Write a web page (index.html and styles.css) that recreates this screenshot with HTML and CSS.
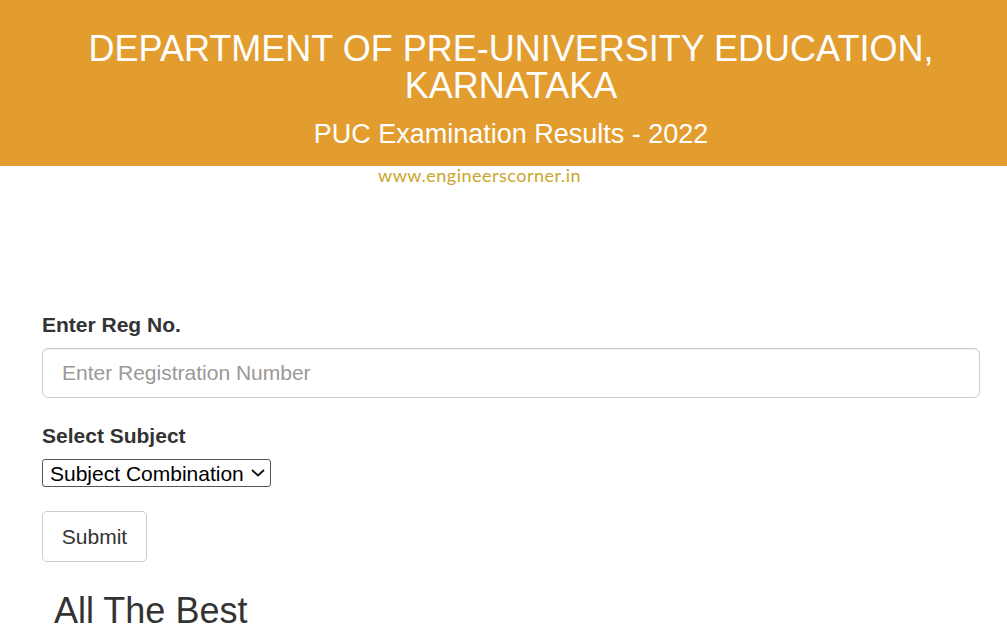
FILE: index.html
```html
<!DOCTYPE html>
<html lang="en">
<head>
  <meta charset="UTF-8">
  <title>PUC Examination Results - 2022</title>
  <meta name="viewport" content="width=device-width, initial-scale=1.0">
  <link rel="stylesheet" href="styles.css">
</head>
<body>

  <div class="header">
    <h1>DEPARTMENT OF PRE-UNIVERSITY EDUCATION, KARNATAKA</h1>
    <h3>PUC Examination Results - 2022</h3>
  </div>
  <div class="watermark">www.engineerscorner.in</div>

  <form class="result-form">
    <div class="form-group">
      <label for="regno">Enter Reg No.</label>
      <input type="text" id="regno" class="form-control" placeholder="Enter Registration Number">
    </div>
    <div class="form-group select-group">
      <label for="subject">Select Subject</label>
      <span class="select-wrap">
        <select id="subject" class="subject-select">
          <option>Subject Combination</option>
        </select>
        <svg class="chevron" width="14" height="8" viewBox="0 0 14 8">
          <path d="M1 1 L7 6.5 L13 1" fill="none" stroke="#111" stroke-width="1.8"/>
        </svg>
      </span>
    </div>
    <button type="button" class="btn">Submit</button>
  </form>

  <h2 class="best">All The Best</h2>

</body>
</html>
```

FILE: styles.css
```css
* { box-sizing: border-box; margin: 0; padding: 0; }
body {
  font-family: "Liberation Sans", Arial, sans-serif;
  color: #333;
  background: #fff;
}
.header {
  background-color: #e39d2f;
  color: #fff;
  text-align: center;
  height: 166px;
  padding: 30px 53px 0 68px;
}
.header h1 {
  font-weight: normal;
  font-size: 36px;
  line-height: 37px;
}
.header h3 {
  font-weight: normal;
  font-size: 27px;
  line-height: 30px;
  margin-top: 15px;
}
.watermark {
  font-family: Lato, "Open Sans", sans-serif;
  font-size: 18px;
  color: #c9a62a;
  letter-spacing: 0.5px;
  padding-left: 378px;
  margin-top: -2px;
}
.result-form {
  margin: 127px 27px 0 42px;
}
.form-group { margin-bottom: 26px; }
.form-group label {
  display: block;
  font-weight: bold;
  font-size: 21px;
  line-height: 24px;
  margin-bottom: 11px;
}
.form-control {
  width: 100%;
  height: 50px;
  border: 1px solid #ccc;
  border-radius: 6px;
  padding: 0 19px;
  font-family: inherit;
  font-size: 21px;
  color: #555;
  box-shadow: inset 0 1px 1px rgba(0,0,0,0.075);
}
.form-control::placeholder { color: #999; }
.select-group { margin-bottom: 24px; }
.select-wrap {
  position: relative;
  display: inline-block;
}
.subject-select {
  appearance: none;
  -webkit-appearance: none;
  display: block;
  font-family: inherit;
  font-size: 21px;
  color: #000;
  height: 28px;
  width: 229px;
  border: 1px solid #555;
  border-radius: 3px;
  padding: 0 0 0 7px;
  background: #fff;
}
.chevron {
  position: absolute;
  right: 6px;
  top: 10px;
  pointer-events: none;
}
.btn {
  font-family: inherit;
  font-size: 21px;
  color: #333;
  background: #fff;
  border: 1px solid #ccc;
  border-radius: 5px;
  height: 51px;
  width: 105px;
}
.best {
  font-weight: normal;
  font-size: 36px;
  line-height: 40px;
  margin: 29px 0 0 54px;
  color: #333;
}
```
